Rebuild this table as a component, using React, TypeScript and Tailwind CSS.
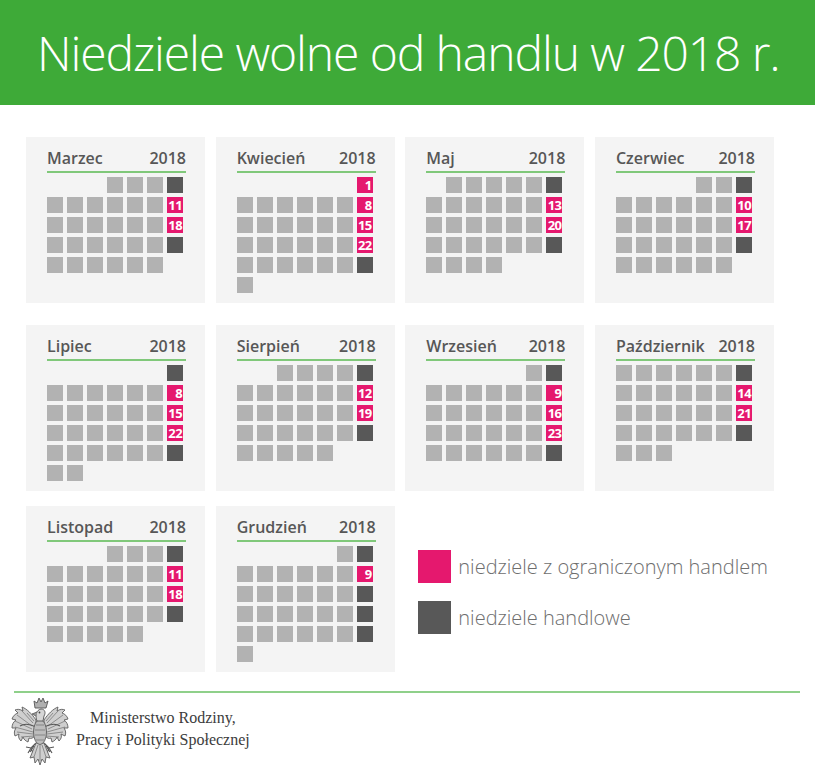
import React from "react"

type Month = { name: string; first: number; days: number; pink: number[] }

const months: Month[] = [
  { name: "Marzec", first: 3, days: 31, pink: [11, 18] },
  { name: "Kwiecień", first: 6, days: 30, pink: [1, 8, 15, 22] },
  { name: "Maj", first: 1, days: 31, pink: [13, 20] },
  { name: "Czerwiec", first: 4, days: 30, pink: [10, 17] },
  { name: "Lipiec", first: 6, days: 31, pink: [8, 15, 22] },
  { name: "Sierpień", first: 2, days: 31, pink: [12, 19] },
  { name: "Wrzesień", first: 5, days: 30, pink: [9, 16, 23] },
  { name: "Październik", first: 0, days: 31, pink: [14, 21] },
  { name: "Listopad", first: 3, days: 30, pink: [11, 18] },
  { name: "Grudzień", first: 5, days: 31, pink: [9] },
]

function MonthCard({ month }: { month: Month }) {
  const cells = []
  for (let i = 0; i < month.first; i++) {
    cells.push(<div key={"e" + i} className="h-[16px] w-[16px]" />)
  }
  for (let d = 1; d <= month.days; d++) {
    const sunday = (month.first + d - 1) % 7 === 6
    const pink = month.pink.includes(d)
    if (pink) {
      cells.push(
        <div
          key={d}
          className="h-[16px] w-[16px] bg-[#e5186e] pr-[1px] text-right text-[13px] font-bold leading-[16px] tracking-[-0.6px] text-white"
        >
          {d}
        </div>
      )
    } else if (sunday) {
      cells.push(<div key={d} className="h-[16px] w-[16px] bg-[#585858]" />)
    } else {
      cells.push(<div key={d} className="h-[16px] w-[16px] bg-[#b2b2b2]" />)
    }
  }

  return (
    <div className="h-[166px] w-[179px] bg-[#f4f4f4] pl-[21px] pt-[10px]">
      <div className="flex w-[139px] justify-between text-[16px] font-semibold leading-[22px] text-[#575757]">
        <span>{month.name}</span>
        <span>2018</span>
      </div>
      <div className="mt-[2px] h-[2px] w-[139px] bg-[#80c87a]" />
      <div className="mt-[4px] grid grid-cols-[repeat(7,16px)] gap-[4px]">{cells}</div>
    </div>
  )
}

function Eagle() {
  // one half of the emblem, mirrored for the other side
  const half = (
    <g>
      <path
        d="M26 24 C22 18 17 13 12 11 L13 15 C10 13 7 13 5 14 L8 17 C5 18 3 20 2 23 L6 24 C3 26 2 29 2 32 L6 32 C4 35 4 37 5 40 L9 38 C8 41 9 43 11 45 L13 41 C14 44 16 45 18 46 L19 42 C21 43 23 42 25 40 Z"
        fill="#cfcfcf"
        stroke="#5e5e5e"
        strokeWidth="0.9"
      />
      <path
        d="M12 15 L23 27 M7 19 L22 30 M5 25 L22 33 M5 31 L23 36 M7 36 L23 38 M11 41 L24 40 M17 17 L24 25"
        stroke="#6e6e6e"
        strokeWidth="0.7"
        fill="none"
      />
      <path d="M10 30 C15 27 20 28 26 31" stroke="#555" strokeWidth="1.1" fill="none" />
      <path
        d="M26 47 L21 52 L16 51 M21 52 L18 57 M21 52 L23 57 M24 50 L20 56"
        stroke="#555"
        strokeWidth="1.1"
        fill="none"
      />
    </g>
  )
  return (
    <svg width="60" height="70" viewBox="0 0 60 70">
      {half}
      <g transform="translate(60,0) scale(-1,1)">{half}</g>
      <path
        d="M26 47 L20 62 L24 61 L25 67 L28 63 L30 69 L32 63 L35 67 L36 61 L40 62 L34 47 Z"
        fill="#cfcfcf"
        stroke="#5e5e5e"
        strokeWidth="0.9"
      />
      <path d="M28 49 L24 61 M30 49 L30 65 M32 49 L36 61" stroke="#6e6e6e" strokeWidth="0.7" />
      <ellipse cx="30" cy="36" rx="6.5" ry="12.5" fill="#bdbdbd" stroke="#5a5a5a" strokeWidth="0.9" />
      <path d="M26 29 L34 29 M25 34 L35 34 M25 39 L35 39 M26 44 L34 44" stroke="#6e6e6e" strokeWidth="0.7" />
      <path
        d="M27 25 C25 20 26 14 31 13 C35 13 36 17 34 20 L33 25 Z"
        fill="#d6d6d6"
        stroke="#555"
        strokeWidth="0.9"
      />
      <path d="M27 16 L22 18 L26 20" fill="#9a9a9a" stroke="#555" strokeWidth="0.8" />
      <circle cx="29.5" cy="16.5" r="0.9" fill="#444" />
      <path
        d="M25 12 L24 5 L27 7 L29 2 L31 6 L33 2 L35 7 L38 5 L36 12 Z"
        fill="#b0b0b0"
        stroke="#555"
        strokeWidth="0.9"
      />
    </svg>
  )
}

export default function App() {
  return (
    <div className="relative h-[769px] w-[815px] overflow-hidden bg-white font-['Open_Sans',sans-serif]">
      <div className="flex h-[105px] items-center bg-[#3eaa38] pl-[37px]">
        <h1 className="text-[48px] font-light leading-none tracking-[-1.1px] text-white">
          Niedziele wolne od handlu w 2018 r.
        </h1>
      </div>

      <div className="pl-[26px] pt-[32px]">
        <div className="grid grid-cols-[repeat(4,179px)] gap-x-[10.67px]">
          {months.slice(0, 4).map((m) => (
            <MonthCard key={m.name} month={m} />
          ))}
        </div>
        <div className="mt-[22px] grid grid-cols-[repeat(4,179px)] gap-x-[10.67px]">
          {months.slice(4, 8).map((m) => (
            <MonthCard key={m.name} month={m} />
          ))}
        </div>
        <div className="mt-[15px] grid grid-cols-[repeat(4,179px)] gap-x-[10.67px]">
          {months.slice(8, 10).map((m) => (
            <MonthCard key={m.name} month={m} />
          ))}
          <div className="col-span-2 pl-[13px] pt-[44px]">
            <div className="flex items-center gap-[7px]">
              <div className="h-[33px] w-[33px] bg-[#e5186e]" />
              <span className="text-[20px] font-light text-[#6e6e6e]">niedziele z ograniczonym handlem</span>
            </div>
            <div className="mt-[18px] flex items-center gap-[7px]">
              <div className="h-[33px] w-[33px] bg-[#585858]" />
              <span className="text-[20px] font-light text-[#6e6e6e]">niedziele handlowe</span>
            </div>
          </div>
        </div>
      </div>

      <div className="ml-[14px] mt-[19px] h-[2px] w-[786px] bg-[#8fd08a]" />

      <div className="mt-[3px] flex items-start pl-[10px]">
        <Eagle />
        <div className="ml-[6px] mt-[11px] text-center font-['Liberation_Serif',serif] text-[16px] leading-[22px] text-[#3c3c3c]">
          <div>Ministerstwo Rodziny,</div>
          <div>Pracy i Polityki Społecznej</div>
        </div>
      </div>
    </div>
  )
}
